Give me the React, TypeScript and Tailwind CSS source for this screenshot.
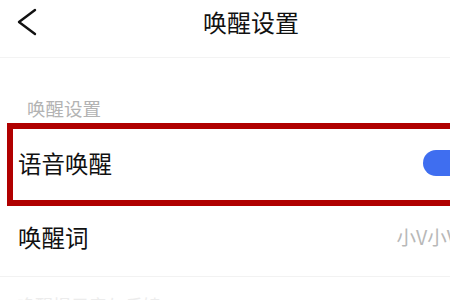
const font = { fontFamily: '"Noto Sans CJK SC", "Noto Sans", sans-serif' };

const App = () => {
  return (
    <div className="w-[450px] h-[300px] overflow-hidden bg-white" style={font}>
      {/* Header */}
      <div className="relative h-[58px] border-b border-[#f3f3f3] flex items-center">
        <button className="absolute left-[15px] top-[8px] w-[24px] h-[28px] flex items-center justify-center">
          <svg width="22" height="28" viewBox="0 0 22 28" fill="none">
            <path d="M19 2 L3 14 L19 26" stroke="#111" strokeWidth="2.4" strokeLinecap="round" strokeLinejoin="round" />
          </svg>
        </button>
        <h1 className="absolute left-[203px] top-[6px] text-[24px] leading-[32px] text-[#111] whitespace-nowrap">
          唤醒设置
        </h1>
      </div>

      {/* Section label */}
      <div className="pl-[27px] pt-[37px] h-[65px]">
        <span className="text-[18.5px] leading-[26px] text-[#b3b3b3]">唤醒设置</span>
      </div>

      {/* Highlighted row */}
      <div className="ml-[7px] w-[474px] h-[83px] border-[6px] border-[#b00000] flex items-center pl-[5px]">
        <span className="text-[23.5px] leading-[30px] text-[#111] whitespace-nowrap -mt-[3px]">语音唤醒</span>
        <div className="ml-auto shrink-0 w-[52px] h-[26px] rounded-full bg-[#3f6ef0] -mt-[3px]" />
      </div>

      {/* Wake word row */}
      <div className="w-[458px] h-[71px] pl-[18px] flex items-center border-b border-[#f2f2f2]">
        <span className="text-[23.5px] leading-[30px] text-[#111] -mt-[8px]">唤醒词</span>
        <span className="ml-auto text-[19.5px] leading-[26px] text-[#b8b8b8] whitespace-nowrap -mt-[8px]">小V小V</span>
      </div>

      {/* Next faint row */}
      <div className="pl-[17px] pt-[16px]">
        <span className="text-[18px] leading-[24px] text-[#ececec] whitespace-nowrap">唤醒提示音与反馈</span>
      </div>
    </div>
  );
};

export default App;
